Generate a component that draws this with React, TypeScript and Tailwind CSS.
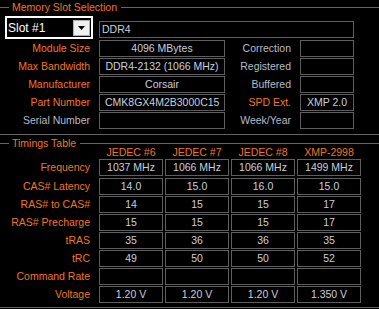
import React from 'react';

const ORANGE = 'text-[#f0761e]';
const GRAY = 'text-[#b4bcc8]';
const VALUE = 'text-[#c8d0dc]';

type InfoRow = {
  label: string;
  labelColor: string;
  value: string;
  left?: boolean;
  right: string;
  rightColor: string;
  rightValue: string;
};

const infoRows: InfoRow[] = [
  { label: 'Module Size', labelColor: ORANGE, value: '4096 MBytes', right: 'Correction', rightColor: GRAY, rightValue: '' },
  { label: 'Max Bandwidth', labelColor: ORANGE, value: 'DDR4-2132 (1066 MHz)', right: 'Registered', rightColor: GRAY, rightValue: '' },
  { label: 'Manufacturer', labelColor: ORANGE, value: 'Corsair', right: 'Buffered', rightColor: GRAY, rightValue: '' },
  { label: 'Part Number', labelColor: ORANGE, value: 'CMK8GX4M2B3000C15', left: true, right: 'SPD Ext.', rightColor: ORANGE, rightValue: 'XMP 2.0' },
  { label: 'Serial Number', labelColor: GRAY, value: '', right: 'Week/Year', rightColor: GRAY, rightValue: '' },
];

const columns = ['JEDEC #6', 'JEDEC #7', 'JEDEC #8', 'XMP-2998'];

const timings: { label: string; values: string[] }[] = [
  { label: 'Frequency', values: ['1037 MHz', '1066 MHz', '1066 MHz', '1499 MHz'] },
  { label: 'CAS# Latency', values: ['14.0', '15.0', '16.0', '15.0'] },
  { label: 'RAS# to CAS#', values: ['14', '15', '15', '17'] },
  { label: 'RAS# Precharge', values: ['15', '15', '15', '17'] },
  { label: 'tRAS', values: ['35', '36', '36', '35'] },
  { label: 'tRC', values: ['49', '50', '50', '52'] },
  { label: 'Command Rate', values: ['', '', '', ''] },
  { label: 'Voltage', values: ['1.20 V', '1.20 V', '1.20 V', '1.350 V'] },
];

const GroupHeader: React.FC<{ title: string }> = ({ title }) => (
  <div className="flex items-start h-[14px]">
    <div className="w-[9px] h-px mt-[7px] bg-[#646464]" />
    <span className={`pl-[3px] pr-[4px] leading-[14px] whitespace-nowrap ${ORANGE}`}>{title}</span>
    <div className="flex-1 h-px mt-[7px] bg-[#646464]" />
  </div>
);

const Field: React.FC<{ value: string; className?: string; left?: boolean }> = ({ value, className = '', left }) => (
  <div
    className={`h-[17px] border border-[#5e5e5e] flex items-center whitespace-nowrap overflow-hidden ${VALUE} ${
      left ? 'justify-start pl-[5px]' : 'justify-center'
    } ${className}`}
  >
    {value}
  </div>
);

export default function App() {
  return (
    <div className="w-[379px] h-[309px] bg-black overflow-hidden text-[10.5px] leading-none font-['Liberation_Sans',Arial,sans-serif]">
      <GroupHeader title="Memory Slot Selection" />

      <div className="flex mt-[2px] h-[23px]">
        <div className="ml-[5px] w-[88px] h-[23px] border-2 border-white bg-black flex items-center">
          <span className="pl-[1px] text-white text-[12px]">Slot #1</span>
          <div className="ml-auto mr-px self-end mb-px w-[17px] h-[16px] bg-[#f0f0f0] border border-[#adadad] flex items-center justify-center">
            <svg width="7" height="4" viewBox="0 0 7 4">
              <path d="M0 0H7L3.5 4Z" fill="#000" />
            </svg>
          </div>
        </div>
        <div className={`ml-[6px] mt-[5px] w-[255px] h-[17px] border border-[#5e5e5e] flex items-center pl-[2px] ${VALUE}`}>
          DDR4
        </div>
      </div>

      <div className="mt-[1px] flex flex-col gap-px">
        {infoRows.map((r) => (
          <div key={r.label} className="flex items-center h-[17px]">
            <div className={`w-[90px] text-right whitespace-nowrap ${r.labelColor}`}>{r.label}</div>
            <Field value={r.value} left={r.left} className="ml-[9px] w-[126px]" />
            <div className={`w-[66px] text-right whitespace-nowrap ${r.rightColor}`}>{r.right}</div>
            <Field value={r.rightValue} className="ml-[9px] w-[54px]" />
          </div>
        ))}
      </div>

      <div className="h-[5px]" />
      <div className="h-px bg-[#646464]" />

      <div className="mt-[1px]">
        <GroupHeader title="Timings Table" />
      </div>

      <div className="-mt-[4px] h-[12px] flex pl-[99px] gap-[2px]">
        {columns.map((c) => (
          <div key={c} className={`w-[64px] text-center leading-[12px] whitespace-nowrap ${ORANGE}`}>
            {c}
          </div>
        ))}
      </div>

      <div className="mt-[1px] flex flex-col gap-px">
        {timings.map((t, i) => (
          <div key={t.label} className={`flex items-center h-[17px] ${i === 0 ? 'mb-px' : ''}`}>
            <div className={`w-[90px] text-right whitespace-nowrap ${ORANGE}`}>{t.label}</div>
            <div className="ml-[9px] flex gap-[2px]">
              {t.values.map((v, j) => (
                <Field key={j} value={v} className="w-[64px]" />
              ))}
            </div>
          </div>
        ))}
      </div>

      <div className="mt-[4px] h-px bg-[#646464]" />
    </div>
  );
}
